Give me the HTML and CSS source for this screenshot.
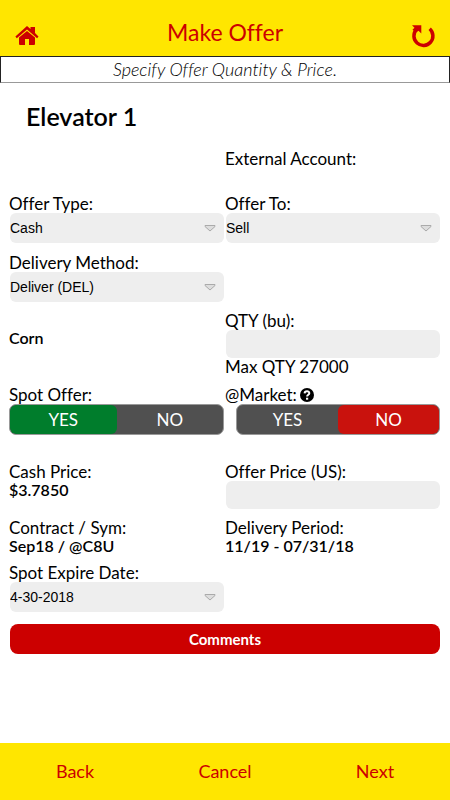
FILE: index.html
```html
<!DOCTYPE html>
<html lang="en">
<head>
<meta charset="utf-8">
<meta name="viewport" content="width=device-width, initial-scale=1">
<title>Make Offer</title>
<link rel="stylesheet" href="styles.css">
</head>
<body>
<header class="topbar">
  <a class="icon-link" href="#" aria-label="Home">
    <svg class="icon" viewBox="0 -2 24 24" aria-hidden="true"><path d="M12 5 4 11.500V18q0 1 1 1h5v-6h4v6h5q1 0 1-1v-6.500z"/><path d="M12 0 15.500 3V1H20v6l3.500 3.500-1.400 1.700L12 3.400 1.800 12.200.400 10.500z"/></svg>
  </a>
  <h1 class="title">Make Offer</h1>
  <button class="icon-link" type="button" aria-label="Refresh">
    <svg class="icon" viewBox="0 0 24 24" aria-hidden="true"><path class="ring" d="M18.700 4.800A9.500 9.500 0 1 1 5.300 5.600"/><path d="M1 1.200h9.300v8.300L7.500 6.800 5 8.500 1.500 5.800 3.500 3.800z"/></svg>
  </button>
</header>
<p class="banner">Specify Offer Quantity &amp; Price.</p>
<main class="content">
  <h2 class="location">Elevator 1</h2>
  <form class="form" id="offer">
    <div class="row row-account">
      <div class="cell cell-right">External Account:</div>
    </div>
    <div class="row row-select">
      <div class="cell">
        <label for="type">Offer Type:</label>
        <div class="select"><select id="type"><option>Cash</option></select><svg class="arrow" viewBox="0 0 12 8" aria-hidden="true"><path d="M1 1.500h10v1L6 7 1 2.500z"/></svg></div>
      </div>
      <div class="cell">
        <label for="to">Offer To:</label>
        <div class="select"><select id="to"><option>Sell</option></select><svg class="arrow" viewBox="0 0 12 8" aria-hidden="true"><path d="M1 1.500h10v1L6 7 1 2.500z"/></svg></div>
      </div>
    </div>
    <div class="row">
      <div class="cell">
        <label for="method">Delivery Method:</label>
        <div class="select"><select id="method"><option>Deliver (DEL)</option></select><svg class="arrow" viewBox="0 0 12 8" aria-hidden="true"><path d="M1 1.500h10v1L6 7 1 2.500z"/></svg></div>
      </div>
    </div>
    <div class="row">
      <div class="cell commodity"><strong>Corn</strong></div>
      <div class="cell">
        <label for="qty">QTY (bu):</label>
        <div class="select"><input class="field" id="qty" type="text" inputmode="numeric"></div>
        <span>Max QTY 27000</span>
      </div>
    </div>
    <div class="row row-toggles">
      <div class="cell" role="radiogroup" aria-labelledby="spot-label">
        <span id="spot-label">Spot Offer:</span>
        <div class="toggle">
          <label class="option option-yes"><input type="radio" name="spot" checked>YES</label>
          <label class="option option-no"><input type="radio" name="spot">NO</label>
        </div>
      </div>
      <div class="cell" role="radiogroup" aria-labelledby="market-label">
        <div class="caption"><span id="market-label">@Market:</span>
          <svg class="help" viewBox="0 0 14 14" aria-hidden="true"><circle cx="7" cy="7" r="7"/><path class="mark" d="M4.600 5.400C4.700 2.500 9.400 2.600 9.300 5.200 9.300 6.800 7.100 6.700 7.100 8.600"/><path class="dot" d="M6 9.700h2.200v2H6z"/></svg>
        </div>
        <div class="toggle toggle-indent">
          <label class="option option-yes"><input type="radio" name="market">YES</label>
          <label class="option option-no"><input type="radio" name="market" checked>NO</label>
        </div>
      </div>
    </div>
    <div class="row">
      <div class="cell"><span>Cash Price:</span><strong>$3.7850</strong></div>
      <div class="cell">
        <label for="price">Offer Price (US):</label>
        <div class="select"><input class="field" id="price" type="text" inputmode="decimal"></div>
      </div>
    </div>
    <div class="row">
      <div class="cell"><span>Contract / Sym:</span><strong>Sep18 / @C8U</strong></div>
      <div class="cell"><span>Delivery Period:</span><strong>11/19 - 07/31/18</strong></div>
    </div>
    <div class="row">
      <div class="cell">
        <label for="expire">Spot Expire Date:</label>
        <div class="select"><select id="expire"><option>4-30-2018</option></select><svg class="arrow" viewBox="0 0 12 8" aria-hidden="true"><path d="M1 1.500h10v1L6 7 1 2.500z"/></svg></div>
      </div>
    </div>
    <div class="select"><button class="comments" type="button">Comments</button></div>
  </form>
</main>
<footer class="actions">
  <button type="button">Back</button>
  <button type="button">Cancel</button>
  <button type="submit" form="offer">Next</button>
</footer>
</body>
</html>
```
FILE: styles.css
```css
* {
  box-sizing: border-box;
}

body {
  margin: 0;
  min-height: 100vh;
  display: flex;
  flex-direction: column;
  background: #fff;
  color: #000;
  font: 17px/18px Lato, "Liberation Sans", sans-serif;
  font-variant-ligatures: none;
}

button {
  border: 0;
  padding: 0;
  background: none;
  font: inherit;
  cursor: pointer;
}

strong {
  font-size: 16px;
  font-weight: 600;
  line-height: 17px;
}

.topbar {
  display: flex;
  justify-content: space-between;
  align-items: flex-end;
  height: 56px;
  padding: 0 15px 8px;
  background: #ffe600;
  color: #c00;
}

.title {
  margin: 0;
  font-size: 23px;
  font-weight: 400;
  line-height: 32px;
}

.icon-link {
  display: block;
  color: inherit;
}

.icon {
  display: block;
  width: 24px;
  height: 24px;
  fill: currentColor;
}

.ring {
  fill: none;
  stroke: currentColor;
  stroke-width: 3.5;
}

.banner {
  margin: 0;
  border: 1px solid #222;
  border-bottom-color: #999;
  font-size: 18px;
  font-style: italic;
  font-weight: 300;
  line-height: 25px;
  text-align: center;
}

.content {
  flex: 1;
  padding: 17px 10px 12px 9px;
}

.location {
  margin: 0 0 18px 17px;
  font-size: 25px;
  font-weight: 600;
  line-height: 32px;
}

.row {
  display: grid;
  grid-template-columns: 1fr 1fr;
  column-gap: 1px;
  margin-bottom: 10px;
}

.row-account {
  min-height: 35px;
}

.row-select {
  margin-bottom: 11px;
}

.row-toggles {
  margin-bottom: 28px;
}

.cell {
  display: flex;
  flex-direction: column;
}

.cell-right {
  grid-column: 2;
}

.commodity {
  padding-top: 17px;
}

.select {
  position: relative;
  margin-left: 1px;
}

.select select,
.field {
  display: block;
  appearance: none;
  width: 100%;
  height: 30px;
  padding: 0 24px 0 0;
  border: 0;
  border-radius: 6px;
  background: #eee;
  color: #000;
  font: 14px "Liberation Sans", sans-serif;
}

.select .field {
  height: 28px;
}

.arrow {
  position: absolute;
  top: 11px;
  right: 8px;
  width: 12px;
  height: 8px;
  fill: #ddd;
  stroke: #aaa;
  pointer-events: none;
}

.caption {
  display: flex;
  align-items: center;
  gap: 3px;
}

.help {
  width: 14px;
  height: 14px;
}

.mark {
  fill: none;
  stroke: #fff;
  stroke-width: 2;
}

.dot {
  fill: #fff;
}

.toggle {
  display: flex;
  height: 31px;
  border: 1px solid #999;
  border-radius: 7px;
  overflow: hidden;
  background: #505050;
  color: #fff;
}

.toggle-indent {
  margin-left: 11px;
}

.option {
  flex: 1;
  border-radius: 6px;
  line-height: 29px;
  text-align: center;
  cursor: pointer;
}

.option input {
  position: absolute;
  opacity: 0;
  pointer-events: none;
}

.option-yes:has(:checked) {
  background: #007d2c;
}

.option-no:has(:checked) {
  background: #c9120d;
}

.comments {
  display: block;
  width: 100%;
  margin-top: 12px;
  border-radius: 8px;
  background: #c00;
  color: #fff;
  font-size: 15px;
  font-weight: 700;
  line-height: 30px;
}

.actions {
  display: flex;
  justify-content: space-around;
  background: #ffe600;
}

.actions button {
  flex: 1;
  color: #c00;
  font-size: 18px;
  line-height: 57px;
}
```
